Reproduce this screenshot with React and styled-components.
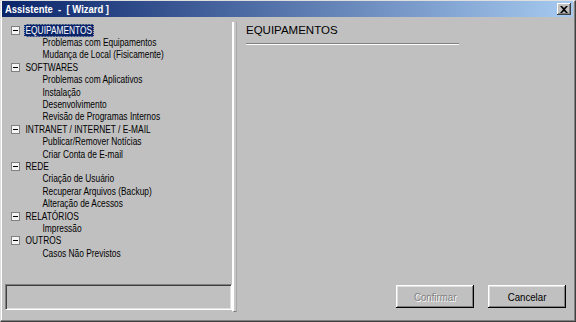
import styled, { createGlobalStyle } from 'styled-components'

const Global = createGlobalStyle`
  html, body { margin: 0; padding: 0; background: #c0c0c0; }
  body { font-family: "Liberation Sans", Arial, sans-serif; font-size: 11px; color: #000; }
`

const tree = [
  { title: 'EQUIPAMENTOS', items: ['Problemas com Equipamentos', 'Mudança de Local (Fisicamente)'] },
  { title: 'SOFTWARES', items: ['Problemas com Aplicativos', 'Instalação', 'Desenvolvimento', 'Revisão de Programas Internos'] },
  { title: 'INTRANET / INTERNET / E-MAIL', items: ['Publicar/Remover Notícias', 'Criar Conta de E-mail'] },
  { title: 'REDE', items: ['Criação de Usuário', 'Recuperar Arquivos (Backup)', 'Alteração de Acessos'] },
  { title: 'RELATÓRIOS', items: ['Impressão'] },
  { title: 'OUTROS', items: ['Casos Não Previstos'] },
]

const Window = styled.div`
  box-sizing: border-box;
  width: 576px;
  height: 322px;
  display: flex;
  flex-direction: column;
  background: #c0c0c0;
  border-top: 1px solid #dfdfdf;
  border-left: 1px solid #dfdfdf;
  border-right: 1px solid #404040;
  border-bottom: 1px solid #404040;
  box-shadow: inset -1px -1px #808080, inset 1px 1px #fff;
  padding: 0 2px 2px 1px;
`

const TitleBar = styled.div`
  height: 16px;
  display: flex;
  align-items: center;
  justify-content: space-between;
  padding: 0 2px 0 3px;
  background: linear-gradient(to right, #0a246a, #a6caf0);
`

const Narrow = styled.span`
  display: inline-block;
  white-space: pre;
  transform: scaleX(${p => p.$scale || 0.76});
  transform-origin: ${p => (p.$center ? 'center' : 'left')} center;
`

const Title = styled(Narrow)`
  color: #fff;
  font-weight: bold;
  font-size: 11px;
`

const CloseButton = styled.div`
  width: 14px;
  height: 12px;
  display: flex;
  align-items: center;
  justify-content: center;
  background: #c0c0c0;
  box-shadow: inset -1px -1px #404040, inset 1px 1px #fff, inset -2px -2px #808080;
`

const Body = styled.div`
  flex: 1;
  display: flex;
`

const LeftPane = styled.div`
  width: 230px;
  display: flex;
  flex-direction: column;
  padding: 7px 0 9px;
`

const Tree = styled.div`
  flex: 1;
`

const Row = styled.div`
  height: 12.4px;
  display: flex;
  align-items: center;
  padding-left: ${p => (p.$child ? '39px' : '9px')};
`

const MinusBox = styled.span`
  box-sizing: border-box;
  width: 9px;
  height: 9px;
  margin-right: 4px;
  border: 1px solid #808080;
  background: #f4f4f4;
  display: flex;
  align-items: center;
  justify-content: center;
  &::after {
    content: '';
    width: 5px;
    height: 1px;
    background: #000;
  }
`

const Label = styled(Narrow)`
  line-height: 11px;
  padding: 0 1px;
  border: 1px ${p => (p.$selected ? 'dotted #c0c0c0' : 'solid transparent')};
  background: ${p => (p.$selected ? '#0a246a' : 'transparent')};
  color: ${p => (p.$selected ? '#fff' : '#000')};
`

const StatusBox = styled.div`
  height: 26px;
  margin-left: 3px;
  box-sizing: border-box;
  border-top: 1px solid #808080;
  border-left: 1px solid #808080;
  border-right: 1px solid #fff;
  border-bottom: 1px solid #fff;
  box-shadow: inset 1px 1px #404040, inset -1px -1px #dfdfdf;
`

const Splitter = styled.div`
  box-sizing: border-box;
  width: 5px;
  margin: 5px 0 7px;
  border-left: 2px solid #fff;
  border-right: 1px solid #a8a8a8;
  border-bottom: 1px solid #808080;
  background: #c8c8c8;
`

const RightPane = styled.div`
  flex: 1;
  display: flex;
  flex-direction: column;
  padding: 7px 7px 11px 9px;
`

const Heading = styled.div`
  line-height: 13px;
  font-size: 11.5px;
  color: #000;
`

const Divider = styled.div`
  width: 213px;
  height: 1px;
  margin-top: 6px;
  background: #808080;
  border-bottom: 1px solid #fff;
`

const Buttons = styled.div`
  margin-top: auto;
  display: flex;
  justify-content: flex-end;
  gap: 14px;
`

const Button = styled.div`
  width: 78px;
  height: 23px;
  display: flex;
  align-items: center;
  justify-content: center;
  background: #c0c0c0;
  box-shadow: inset -1px -1px #000, inset 1px 1px #fff, inset -2px -2px #808080, inset 2px 2px #dfdfdf;
  color: ${p => (p.$disabled ? '#808080' : '#000')};
  text-shadow: ${p => (p.$disabled ? '1px 1px #fff' : 'none')};
`

export default function App() {
  return (
    <>
      <Global />
      <Window>
        <TitleBar>
          <Title $scale={0.86}>Assistente  -  [ Wizard ]</Title>
          <CloseButton>
            <svg width="8" height="7" viewBox="0 0 8 7">
              <path d="M0 0h2l2 2 2-2h2L5 3.5 8 7H6L4 5 2 7H0l3-3.5z" fill="#000" />
            </svg>
          </CloseButton>
        </TitleBar>
        <Body>
          <LeftPane>
            <Tree>
              {tree.map((group, gi) => (
                <div key={group.title}>
                  <Row>
                    <MinusBox />
                    <Label $selected={gi === 0}>{group.title}</Label>
                  </Row>
                  {group.items.map(item => (
                    <Row $child key={item}>
                      <Label>{item}</Label>
                    </Row>
                  ))}
                </div>
              ))}
            </Tree>
            <StatusBox />
          </LeftPane>
          <Splitter />
          <RightPane>
            <Heading>EQUIPAMENTOS</Heading>
            <Divider />
            <Buttons>
              <Button $disabled><Narrow $center $scale={0.88}>Confirmar</Narrow></Button>
              <Button><Narrow $center $scale={0.88}>Cancelar</Narrow></Button>
            </Buttons>
          </RightPane>
        </Body>
      </Window>
    </>
  )
}
